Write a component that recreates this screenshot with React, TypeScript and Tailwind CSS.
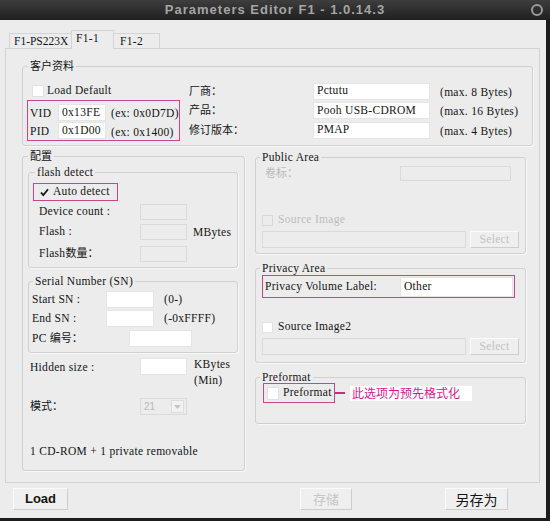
import type { ReactNode } from "react";

const cjk = "text-[11px] tracking-normal";
const sans = "[font-family:'Liberation_Sans',Arial,sans-serif]";
const cjkFont = "[font-family:'Noto_Sans_CJK_SC',sans-serif]";

function Field({ className, disabled, children }: { className: string; disabled?: boolean; children?: ReactNode }) {
  return (
    <div
      className={`${className} flex items-center px-[3px] border ${
        disabled ? "bg-[#ececec] border-[#dadada]" : "bg-white border-[#e4e4e4]"
      }`}
    >
      {children}
    </div>
  );
}

function Check({ disabled, className = "w-[12px] h-[12px]" }: { disabled?: boolean; className?: string }) {
  return (
    <span
      className={`${className} shrink-0 border ${
        disabled ? "bg-[#ececec] border-[#d8d8d8]" : "bg-white border-[#e2e2e2]"
      }`}
    />
  );
}

function Group({
  title,
  className,
  legendClass,
  children,
}: {
  title: ReactNode;
  className: string;
  legendClass: string;
  children?: ReactNode;
}) {
  return (
    <fieldset className={`border border-[#d0d0d0] rounded-[3px] shadow-[1px_1px_0_#f8f8f8] ${className}`}>
      <legend className={legendClass}>{title}</legend>
      {children}
    </fieldset>
  );
}

function Button({ className, children }: { className: string; children: ReactNode }) {
  return (
    <div
      className={`${className} flex items-center justify-center bg-[#efefef] border border-t-[#fbfbfb] border-l-[#fbfbfb] border-b-[#cdcdcd] border-r-[#cdcdcd]`}
    >
      {children}
    </div>
  );
}

function ClientInfo() {
  return (
    <Group
      title="客户资料"
      className="ml-[16px] mt-[10px] w-[511px] h-[87px]"
      legendClass={`${cjk} ml-[5px] px-[2px] leading-[14px]`}
    >
      <div className="mt-[8px] flex">
        {/* left: VID / PID */}
        <div className="ml-[4px] w-[153px]">
          <div className="h-[20px] flex items-center">
            <Check className="ml-[5px] w-[12px] h-[12px]" />
            <span className="ml-[3px]">Load Default</span>
          </div>
          <div className="-mt-[1px] h-[41px] border border-[#c8468e] pt-[3px] pl-[2px]">
            <div className="h-[17px] flex items-center">
              <span className="w-[28px] pt-[3px]">VID</span>
              <Field className="w-[48px] h-[17px]">0x13FE</Field>
              <span className="ml-[5px] pt-[3px]">(ex: 0x0D7D)</span>
            </div>
            <div className="mt-[1px] h-[17px] flex items-center">
              <span className="w-[28px] pt-[3px]">PID</span>
              <Field className="w-[48px] h-[17px]">0x1D00</Field>
              <span className="ml-[5px] pt-[4px]">(ex: 0x1400)</span>
            </div>
          </div>
        </div>

        {/* right: vendor / product / revision */}
        <div className="ml-[9px] flex flex-col">
          <div className="h-[20px] flex items-center">
            <span className={`${cjk} w-[124px]`}>厂商：</span>
            <Field className="w-[117px] h-[17px]">Pctutu</Field>
            <span className="ml-[10px] pt-[3px]">(max. 8 Bytes)</span>
          </div>
          <div className="h-[19px] flex items-center">
            <span className={`${cjk} w-[124px]`}>产品：</span>
            <Field className="w-[117px] h-[17px]">Pooh USB-CDROM</Field>
            <span className="ml-[10px] pt-[3px]">(max. 16 Bytes)</span>
          </div>
          <div className="h-[20px] flex items-center">
            <span className={`${cjk} w-[124px]`}>修订版本：</span>
            <Field className="w-[117px] h-[17px]">PMAP</Field>
            <span className="ml-[10px] pt-[4px]">(max. 4 Bytes)</span>
          </div>
        </div>
      </div>
    </Group>
  );
}

function ConfigGroup() {
  return (
    <Group
      title="配置"
      className="ml-[16px] w-[223px] h-[322px]"
      legendClass={`${cjk} ml-[5px] px-[2px] leading-[14px]`}
    >
      <Group
        title="flash detect"
        className="ml-[5px] mt-[3px] w-[210px] h-[102px]"
        legendClass="ml-[6px] px-[2px] leading-[12px]"
      >
        <div className="ml-[4px] mt-[5px] w-[85px] h-[18px] border border-[#c8468e] flex items-center">
          <svg className="ml-[6px]" width="9" height="9" viewBox="0 0 9 9">
            <path d="M1 4.5 L3.3 7.2 L8 1.2" fill="none" stroke="#111" strokeWidth="1.8" />
          </svg>
          <span className="ml-[4px]">Auto detect</span>
        </div>
        <div className="mt-[3px] h-[16px] flex items-center">
          <span className="ml-[10px] w-[101px]">Device count :</span>
          <Field className="w-[47px] h-[16px]" disabled />
        </div>
        <div className="mt-[4px] h-[16px] flex items-center">
          <span className="ml-[10px] w-[101px]">Flash :</span>
          <Field className="w-[47px] h-[16px]" disabled />
          <span className="ml-[6px] pt-[2px]">MBytes</span>
        </div>
        <div className="mt-[6px] h-[16px] flex items-center">
          <span className="ml-[10px] w-[101px]">
            Flash<span className={cjk}>数量：</span>
          </span>
          <Field className="w-[47px] h-[16px]" disabled />
        </div>
      </Group>

      <Group
        title="Serial Number (SN)"
        className="ml-[5px] mt-[7px] w-[210px] h-[78px]"
        legendClass="ml-[4px] px-[2px] leading-[12px]"
      >
        <div className="mt-[4px] h-[17px] flex items-center">
          <span className="ml-[3px] w-[74px]">Start SN :</span>
          <Field className="w-[48px] h-[17px]" />
          <span className="ml-[10px]">(0-)</span>
        </div>
        <div className="mt-[2px] h-[17px] flex items-center">
          <span className="ml-[3px] w-[74px]">End SN :</span>
          <Field className="w-[48px] h-[17px]" />
          <span className="ml-[10px]">(-0xFFFF)</span>
        </div>
        <div className="mt-[3px] h-[17px] flex items-center">
          <span className="ml-[3px] w-[97px]">
            PC <span className={cjk}>编号：</span>
          </span>
          <Field className="w-[63px] h-[17px]" />
        </div>
      </Group>

      <div className="ml-[7px] mt-[5px] flex items-start">
        <span className="w-[110px] pt-[3px] leading-[12px]">Hidden size :</span>
        <Field className="w-[47px] h-[17px]" />
        <div className="ml-[7px] -mt-[2px] flex flex-col leading-[16px]">
          <span>KBytes</span>
          <span>(Min)</span>
        </div>
      </div>

      <div className="ml-[7px] mt-[10px] h-[17px] flex items-center">
        <span className={`${cjk} w-[110px]`}>模式：</span>
        <div className="w-[47px] h-[17px] border border-[#dadada] bg-[#ececec] flex items-center">
          <span className={`pl-[3px] text-[#b8b8b8] ${sans} tracking-normal text-[10px]`}>21</span>
          <span className="ml-auto mr-[2px] w-[13px] h-[13px] border border-[#dcdcdc] bg-[#f2f2f2] flex items-center justify-center">
            <svg width="7" height="4" viewBox="0 0 7 4">
              <path d="M0 0 L7 0 L3.5 4 Z" fill="#c4c4c4" />
            </svg>
          </span>
        </div>
      </div>

      <div className="ml-[7px] mt-[30px] leading-[12px]">1 CD-ROM + 1 private removable</div>
    </Group>
  );
}

function RightColumn() {
  return (
    <div className="ml-[10px] w-[271px] flex flex-col">
      <Group
        title="Public Area"
        className="mt-[2px] w-[271px] h-[103px]"
        legendClass="ml-[4px] px-[2px] leading-[12px]"
      >
        <div className="mt-[3px] h-[15px] flex items-center">
          <span className={`${cjk} ml-[9px] w-[135px] text-[#b9b9b9]`}>卷标：</span>
          <Field className="w-[111px] h-[15px]" disabled />
        </div>
        <div className="mt-[33px] h-[12px] flex items-center">
          <Check disabled className="ml-[6px] w-[11px] h-[11px]" />
          <span className="ml-[5px] text-[#bdbdbd]">Source Image</span>
        </div>
        <div className="mt-[5px] flex">
          <Field className="ml-[6px] w-[204px] h-[17px]" disabled />
          <Button className="ml-[4px] w-[49px] h-[17px]">
            <span className="text-[#c2c2c2]">Select</span>
          </Button>
        </div>
      </Group>

      <Group
        title="Privacy Area"
        className="mt-[8px] w-[271px] h-[101px]"
        legendClass="ml-[4px] px-[2px] leading-[12px]"
      >
        <div className="mt-[1px] ml-[6px] w-[253px] h-[23px] border border-[#c8468e] flex items-center">
          <span className="pl-[2px] w-[137px]">Privacy Volume Label:</span>
          <Field className="w-[113px] h-[20px]">Other</Field>
        </div>
        <div className="mt-[23px] h-[12px] flex items-center">
          <Check className="ml-[6px] w-[11px] h-[11px]" />
          <span className="ml-[5px]">Source Image2</span>
        </div>
        <div className="mt-[5px] flex">
          <Field className="ml-[6px] w-[204px] h-[17px]" disabled />
          <Button className="ml-[4px] w-[49px] h-[17px]">
            <span className="text-[#c2c2c2]">Select</span>
          </Button>
        </div>
      </Group>

      <Group
        title="Preformat"
        className="mt-[8px] w-[271px] h-[53px]"
        legendClass="ml-[4px] px-[2px] leading-[12px]"
      >
        <div className="flex items-center">
          <div className="ml-[7px] w-[72px] h-[20px] border border-[#c8468e] flex items-center">
            <Check className="ml-[3px] w-[12px] h-[13px]" />
            <span className="ml-[4px]">Preformat</span>
          </div>
          <span className="w-[10px] h-[2px] bg-[#d4287f]" />
          <div className="ml-[5px] w-[122px] h-[15px] bg-white flex items-center">
            <span className={`pl-[2px] text-[12px] tracking-normal text-[#e0168f] ${cjkFont}`}>
              此选项为预先格式化
            </span>
          </div>
        </div>
      </Group>
    </div>
  );
}

export default function App() {
  return (
    <div className="w-[550px] h-[521px] flex flex-col bg-[#1c1c1c] overflow-hidden [font-family:'Liberation_Serif','Noto_Sans_CJK_SC',serif] text-[11.5px] tracking-[0.3px] text-[#141414]">
      {/* title bar */}
      <div className="h-[20px] shrink-0 flex items-center bg-gradient-to-b from-[#3e3e3e] to-[#1f1f1f]">
        <div className="w-[20px]" />
        <div className={`flex-1 text-center ${sans} font-bold text-[13px] tracking-[1px] text-[#a5a5a5]`}>
          Parameters Editor F1 - 1.0.14.3
        </div>
        <div className="w-[20px] flex items-center justify-start">
          <span className="ml-[1px] w-[12px] h-[12px] rounded-full border-[2.5px] border-[#9a9a9a]" />
        </div>
      </div>

      <div className="flex-1 mr-[4px] mb-[3px] bg-[#ececec] flex flex-col">
        {/* tabs */}
        <div className="h-[28px] shrink-0 pl-[9px] flex items-end whitespace-nowrap">
          <div className="h-[15px] w-[62px] border-t border-l border-[#d4d4d4] pl-[4px] leading-[14px] tracking-normal">F1-PS223X</div>
          <div className="relative z-10 -mb-[1px] h-[19px] w-[43px] bg-[#ececec] border-t border-l border-r border-[#d4d4d4] pl-[4px] pt-[1px] leading-[12px]">
            F1-1
          </div>
          <div className="h-[15px] w-[46px] border-t border-r border-[#d4d4d4] pl-[6px] leading-[14px]">F1-2</div>
        </div>

        {/* tab panel */}
        <div className="ml-[5px] w-[535px] h-[435px] shrink-0 border border-[#d2d2d2] flex flex-col">
          <ClientInfo />
          <div className="mt-[3px] flex">
            <ConfigGroup />
            <RightColumn />
          </div>
        </div>

        {/* bottom buttons */}
        <div className="mt-[5px] pl-[13px] flex">
          <Button className="w-[55px] h-[22px]">
            <span className={`${sans} font-bold text-[13px] tracking-normal`}>Load</span>
          </Button>
          <Button className="ml-[232px] w-[52px] h-[22px]">
            <span className={`text-[13px] tracking-normal text-[#c6c6c6] ${cjkFont}`}>存储</span>
          </Button>
          <Button className="ml-[93px] w-[63px] h-[22px]">
            <span className={`text-[14px] tracking-normal ${cjkFont}`}>另存为</span>
          </Button>
        </div>
      </div>
    </div>
  );
}
